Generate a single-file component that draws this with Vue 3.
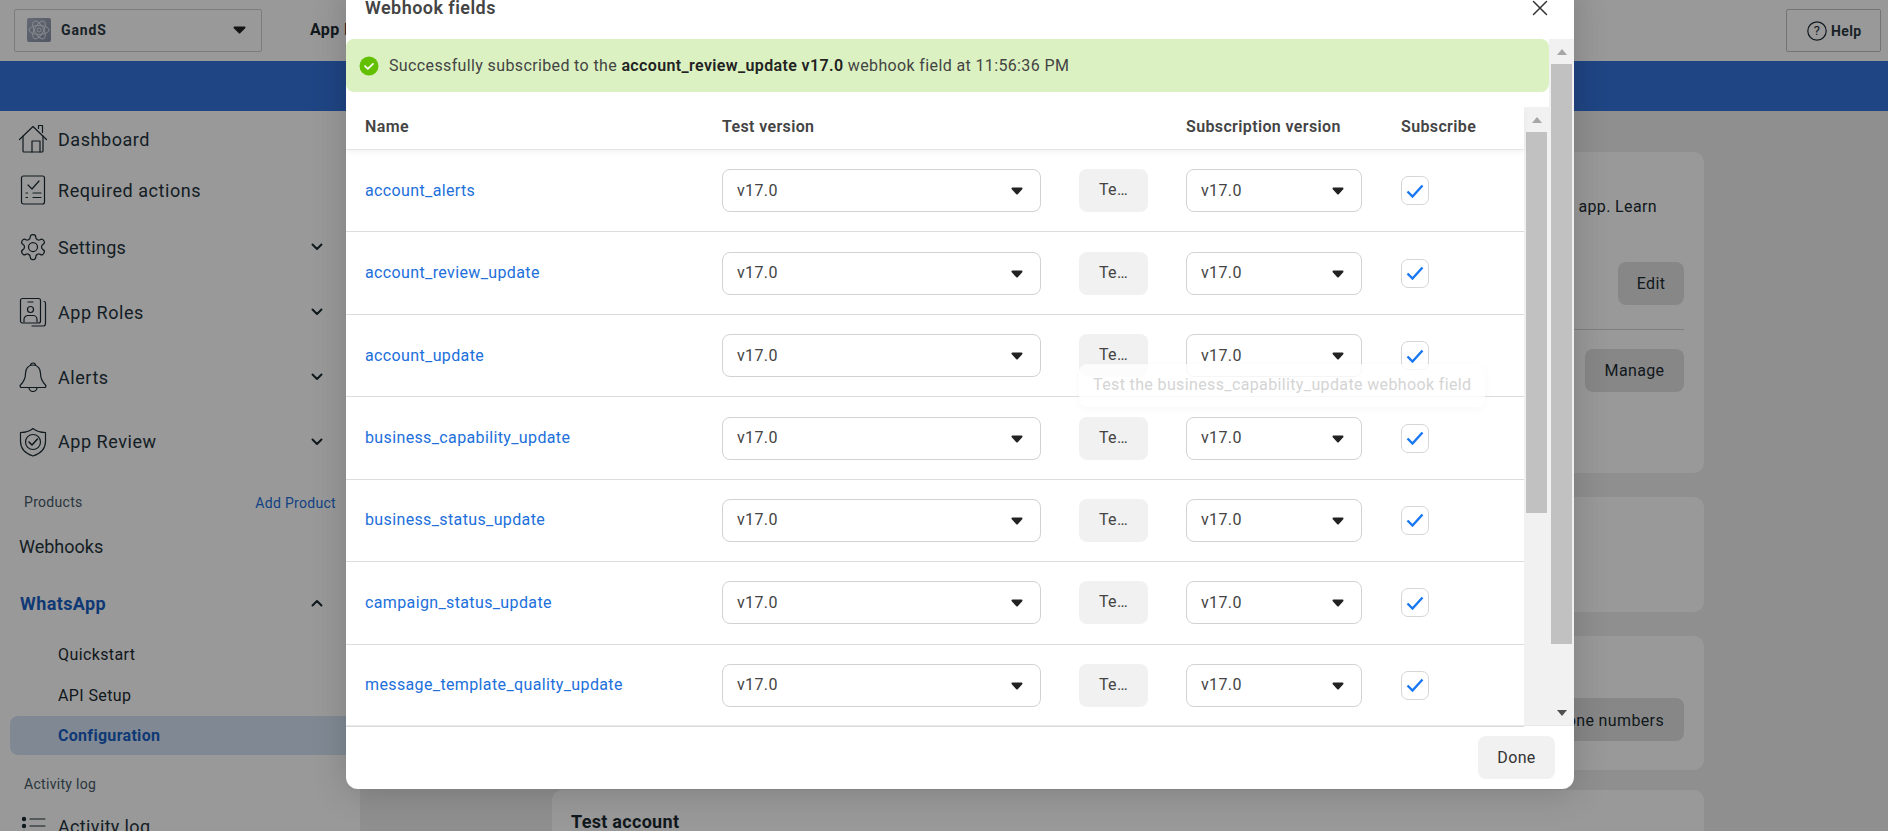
<script setup>
const fields = [
  'account_alerts',
  'account_review_update',
  'account_update',
  'business_capability_update',
  'business_status_update',
  'campaign_status_update',
  'message_template_quality_update'
]
</script>

<template>
  <div class="page">
    <header class="topbar">
      <div class="app-select">
        <span class="app-tile">
          <svg width="24" height="24" viewBox="0 0 24 24" fill="none" stroke="#dde2ec" stroke-width="1">
            <ellipse cx="12" cy="12" rx="10" ry="4.5" />
            <ellipse cx="12" cy="12" rx="10" ry="4.5" transform="rotate(60 12 12)" />
            <ellipse cx="12" cy="12" rx="10" ry="4.5" transform="rotate(120 12 12)" />
            <circle cx="12" cy="12" r="2" />
          </svg>
        </span>
        <span class="app-name">GandS</span>
        <svg class="caret-top" width="13" height="8" viewBox="0 0 13 8"><path d="M1.5 1.5h10L6.5 6.5z" fill="#222" stroke="#222" stroke-width="2" stroke-linejoin="round" /></svg>
      </div>
      <span class="app-id">App ID</span>
      <button class="help">
        <svg width="20" height="20" viewBox="0 0 20 20" fill="none"><circle cx="10" cy="10" r="9.2" stroke="#1c2b33" stroke-width="1.2" /><text x="10" y="14.4" text-anchor="middle" class="help-q">?</text></svg>
        <span>Help</span>
      </button>
    </header>
    <div class="bluebar"></div>

    <div class="content">
      <aside class="sidebar">
        <nav class="group group-a">
          <a class="item">
            <svg class="ico" viewBox="0 0 30 30" fill="none" stroke="#1c2b33" stroke-width="1.2" stroke-linejoin="round" stroke-linecap="round">
              <path d="M1.5 15.5 15 2.5l13.5 13" /><path d="M5 12v15a1 1 0 0 0 1 1h18a1 1 0 0 0 1-1V12" /><path d="M14 28v-11h8v11" /><path d="M20.5 4.5V1.5h4v7" />
            </svg>
            <span>Dashboard</span>
          </a>
          <a class="item">
            <svg class="ico" viewBox="0 0 30 30" fill="none" stroke="#1c2b33" stroke-width="1.2" stroke-linecap="round" stroke-linejoin="round">
              <rect x="3.5" y="1" width="23" height="28" rx="2" /><path d="m10 10 4 4 7-8" /><path d="M15 18h8M15 22.500h8" /><path d="M8 18h1.500M8 22.500h1.500" />
            </svg>
            <span>Required actions</span>
          </a>
        </nav>

        <nav class="group group-b">
          <a class="item tight">
            <svg class="ico" viewBox="0 0 24 24" fill="none" stroke="#1c2b33" stroke-width="1" stroke-linejoin="round">
              <path d="M12.22 2h-.44a2 2 0 0 0-2 2v.18a2 2 0 0 1-1 1.73l-.43.25a2 2 0 0 1-2 0l-.15-.08a2 2 0 0 0-2.730.73l-.22.38a2 2 0 0 0 .73 2.730l.15.1a2 2 0 0 1 1 1.720v.51a2 2 0 0 1-1 1.740l-.15.09a2 2 0 0 0-.73 2.730l.22.38a2 2 0 0 0 2.730.73l.15-.08a2 2 0 0 1 2 0l.43.25a2 2 0 0 1 1 1.730V20a2 2 0 0 0 2 2h.44a2 2 0 0 0 2-2v-.18a2 2 0 0 1 1-1.730l.43-.25a2 2 0 0 1 2 0l.15.08a2 2 0 0 0 2.730-.73l.22-.39a2 2 0 0 0-.73-2.730l-.15-.08a2 2 0 0 1-1-1.740v-.5a2 2 0 0 1 1-1.740l.15-.09a2 2 0 0 0 .73-2.730l-.22-.38a2 2 0 0 0-2.730-.73l-.15.08a2 2 0 0 1-2 0l-.43-.25a2 2 0 0 1-1-1.730V4a2 2 0 0 0-2-2z" />
              <circle cx="12" cy="12" r="3.600" />
            </svg>
            <span>Settings</span>
            <svg class="chev" viewBox="0 0 12 8" fill="none" stroke="#1c2b33" stroke-width="2" stroke-linecap="round" stroke-linejoin="round"><path d="m1.500 1.500 4.500 4.500 4.500-4.500" /></svg>
          </a>
          <a class="item">
            <svg class="ico" viewBox="0 0 30 30" fill="none" stroke="#1c2b33" stroke-width="1.2" stroke-linecap="round" stroke-linejoin="round">
              <rect x="2.500" y="1.500" width="20" height="24.500" rx="2" /><path d="M10 5h5" /><circle cx="12.500" cy="12.500" r="3" /><path d="M6 25v-2.500a4 4 0 0 1 4-4h5a4 4 0 0 1 4 4V25" /><path d="M26 4.500c1 0 1.500.5 1.500 1.500v20c0 1.500-.5 3-2 3H14" />
            </svg>
            <span>App Roles</span>
            <svg class="chev" viewBox="0 0 12 8" fill="none" stroke="#1c2b33" stroke-width="2" stroke-linecap="round" stroke-linejoin="round"><path d="m1.500 1.500 4.500 4.500 4.500-4.500" /></svg>
          </a>
          <a class="item">
            <svg class="ico" viewBox="0 0 30 30" fill="none" stroke="#1c2b33" stroke-width="1.2" stroke-linecap="round" stroke-linejoin="round">
              <path d="M12.500 3.500a2.500 2.500 0 0 1 5 0" /><path d="M15 3c-5 0-7.500 4-7.500 8.500 0 6-2 8.500-5 11.500-1 1 0 2.500 1 2.500h23c1 0 2-1.500 1-2.500-3-3-5-5.500-5-11.500C22.500 7 20 3 15 3z" /><path d="M11 25.500a4 4 0 0 0 8 0" />
            </svg>
            <span>Alerts</span>
            <svg class="chev" viewBox="0 0 12 8" fill="none" stroke="#1c2b33" stroke-width="2" stroke-linecap="round" stroke-linejoin="round"><path d="m1.500 1.500 4.500 4.500 4.500-4.500" /></svg>
          </a>
          <a class="item review">
            <svg class="ico" viewBox="0 0 30 30" fill="none" stroke="#1c2b33" stroke-width="1.2" stroke-linecap="round" stroke-linejoin="round">
              <path d="M15 1.500c3 2.500 7.500 4 12.500 4v9c0 7-5 12-12.500 14.500C7.500 26.500 2.500 21.500 2.500 14.500v-9c5 0 9.500-1.500 12.500-4z" /><circle cx="15" cy="15" r="7.500" /><path d="m11 15 3 3 5.500-6" stroke-width="1.600" />
            </svg>
            <span>App Review</span>
            <svg class="chev" viewBox="0 0 12 8" fill="none" stroke="#1c2b33" stroke-width="2" stroke-linecap="round" stroke-linejoin="round"><path d="m1.500 1.500 4.500 4.500 4.500-4.500" /></svg>
          </a>
        </nav>

        <div class="section products">
          <span>Products</span>
          <a class="add">Add Product</a>
        </div>
        <a class="item plain webhooks"><span>Webhooks</span></a>
        <a class="item plain whatsapp">
          <span>WhatsApp</span>
          <svg class="chev" viewBox="0 0 12 8" fill="none" stroke="#1c2b33" stroke-width="2" stroke-linecap="round" stroke-linejoin="round"><path d="m1.500 6.500 4.500-4.500 4.500 4.500" /></svg>
        </a>
        <div class="sub">
          <a class="sub-item">Quickstart</a>
          <a class="sub-item">API Setup</a>
          <a class="sub-item active">Configuration</a>
        </div>
        <div class="section log-label"><span>Activity log</span></div>
        <a class="item log">
          <svg class="ico" viewBox="0 0 30 30" fill="none" stroke="#1c2b33" stroke-width="1.2" stroke-linecap="round">
            <circle cx="6" cy="8" r="1.600" fill="#1c2b33" /><circle cx="6" cy="15" r="1.600" fill="#1c2b33" /><circle cx="6" cy="22" r="1.600" fill="#1c2b33" />
            <path d="M12 8h15M12 15h15M12 22h15" />
          </svg>
          <span>Activity log</span>
        </a>
      </aside>

      <main class="main">
        <section class="card card-a">
          <p class="learn">app. Learn</p>
          <div class="card-row"><button class="bg-btn edit">Edit</button></div>
          <div class="card-line"></div>
          <div class="card-row"><button class="bg-btn manage">Manage</button></div>
        </section>
        <section class="card card-b"></section>
        <section class="card card-c">
          <div class="card-row"><button class="bg-btn phones">Manage phone numbers</button></div>
        </section>
        <section class="card card-d"><h3>Test account</h3></section>
      </main>
    </div>

    <div class="overlay"></div>

    <div class="modal">
      <div class="modal-head">
        <h2>Webhook fields</h2>
        <svg width="16" height="16" viewBox="0 0 16 16" fill="none" stroke="#333" stroke-width="1.500" stroke-linecap="round"><path d="m1.500 1.500 13 13M14.500 1.500l-13 13" /></svg>
      </div>

      <div class="modal-body">
        <div class="modal-main">
          <div class="banner">
            <svg width="20" height="20" viewBox="0 0 20 20"><circle cx="10" cy="10" r="9.500" fill="#63c000" /><path d="m6 10.200 2.800 2.600L14 7.800" fill="none" stroke="#fff" stroke-width="1.700" stroke-linecap="round" stroke-linejoin="round" /></svg>
            <p>Successfully subscribed to the <b>account_review_update v17.0</b> webhook field at 11:56:36 PM</p>
          </div>

          <div class="table-wrap">
            <div class="table">
              <div class="thead grid">
                <span>Name</span>
                <span>Test version</span>
                <span></span>
                <span>Subscription version</span>
                <span class="subscribe">Subscribe</span>
              </div>
              <div v-for="f in fields" :key="f" class="row grid">
                <a class="link">{{ f }}</a>
                <div class="select">
                  <span>v17.0</span>
                  <svg width="12" height="8" viewBox="0 0 12 8"><path d="M1.500 1.500h9L6 6.500z" fill="#222" stroke="#222" stroke-width="2" stroke-linejoin="round" /></svg>
                </div>
                <button class="test">Te…</button>
                <div class="select">
                  <span>v17.0</span>
                  <svg width="12" height="8" viewBox="0 0 12 8"><path d="M1.500 1.500h9L6 6.500z" fill="#222" stroke="#222" stroke-width="2" stroke-linejoin="round" /></svg>
                </div>
                <span class="check">
                  <svg width="18" height="14" viewBox="0 0 18 14" fill="none"><path d="m1.500 7.500 5 5 10-11" stroke="#1877f2" stroke-width="2.400" stroke-linejoin="miter" /></svg>
                </span>
              </div>
              <div class="tooltip">Test the business_capability_update webhook field</div>
            </div>
            <div class="scroll inner">
              <i class="arrow up"></i>
              <i class="thumb"></i>
            </div>
          </div>
        </div>

        <div class="scroll outer">
          <i class="arrow up"></i>
          <i class="thumb"></i>
          <i class="arrow down"></i>
        </div>
      </div>

      <div class="modal-foot">
        <button class="done">Done</button>
      </div>
    </div>
  </div>
</template>

<style>
html, body { margin: 0; overflow: hidden; }
</style>

<style scoped>
.page {
  position: relative;
  width: 1888px;
  height: 831px;
  overflow: hidden;
  background: #eeeeee;
  font-family: Roboto, "Liberation Sans", sans-serif;
  font-size: 16px;
  letter-spacing: .37px;
  color: #1c2b33;
}
button { font-family: inherit; letter-spacing: inherit; border: 0; }
p, h2, h3 { margin: 0; }

.topbar {
  height: 61px;
  box-sizing: border-box;
  background: #fff;
  display: flex;
  align-items: center;
  padding: 0 7px 0 14px;
}
.app-select {
  width: 248px;
  height: 43px;
  box-sizing: border-box;
  border: 1px solid #ccd0d5;
  border-radius: 2px;
  display: flex;
  align-items: center;
  padding: 0 15px 0 12px;
  margin-top: -1px;
}
.app-tile {
  width: 24px;
  height: 24px;
  border-radius: 2px;
  background: linear-gradient(135deg, #a6afc0, #8790a6);
  display: flex;
}
.app-name { margin-left: 10px; font-size: 14px; font-weight: 700; letter-spacing: .9px; color: #2c3a44; }
.caret-top { margin-left: auto; }
.app-id { margin-left: 48px; font-size: 16px; font-weight: 700; margin-top: -3px; }
.help {
  margin-left: auto;
  width: 95px;
  height: 43px;
  box-sizing: border-box;
  border: 1px solid #bec3c9;
  border-radius: 2px;
  background: #fff;
  display: flex;
  align-items: center;
  padding-left: 20px;
  gap: 4px;
  font-size: 14px;
  font-weight: 700;
  color: #2c3a44;
}
.help-q { font-family: Roboto, sans-serif; font-size: 13px; font-weight: 400; fill: #1c2b33; }
.bluebar { height: 50px; background: #3474dd; }

.content { display: flex; height: 720px; }
.sidebar {
  width: 360px;
  flex: none;
  background: #fff;
  box-sizing: border-box;
  padding-top: 7px;
  font-size: 18px;
  letter-spacing: .55px;
}
.group { display: flex; flex-direction: column; }
.group-a { gap: 9px; }
.group-b { gap: 23px; margin-top: 15px; }
.item {
  height: 42px;
  display: flex;
  align-items: center;
  gap: 10px;
  padding: 0 37px 0 18px;
  color: #24333c;
}
.tight { letter-spacing: .3px; }
.review span { margin-top: -2px; }
.ico { width: 30px; height: 30px; flex: none; }
.chev { width: 12px; height: 8px; margin-left: auto; flex: none; }
.section {
  display: flex;
  justify-content: space-between;
  align-items: center;
  box-sizing: border-box;
  font-size: 14px;
  letter-spacing: .3px;
  color: #465a69;
  height: 24px;
  padding: 0 24px;
}
.products { margin-top: 27px; }
.add { color: #216fdb; margin-top: 2px; }
.plain { padding-left: 20px; }
.webhooks { margin-top: 11px; padding-left: 19px; letter-spacing: 0; }
.whatsapp { margin-top: 15px; color: #1a5fc4; font-weight: 700; letter-spacing: .4px; }
.sub { margin-top: 10px; display: flex; flex-direction: column; letter-spacing: .4px; }
.sub-item {
  height: 41px;
  display: flex;
  align-items: center;
  padding-left: 58px;
  font-size: 16px;
}
.sub-item.active {
  height: 39px;
  margin: 0 0 0 10px;
  padding-left: 48px;
  border-radius: 8px 0 0 8px;
  background: #d5e5f6;
  color: #1a5fc4;
  font-weight: 700;
  letter-spacing: .3px;
}
.log-label { margin-top: 17px; }
.log { margin-top: 9px; letter-spacing: .35px; }
.log span { font-size: 18px; }

.main {
  flex: 1;
  box-sizing: border-box;
  padding: 41px 184px 0 192px;
  display: flex;
  flex-direction: column;
  gap: 24px;
}
.card {
  flex: none;
  background: #fff;
  border-radius: 10px;
  box-sizing: border-box;
  padding: 0 20px;
}
.card-a { height: 321px; padding-top: 43px; }
.card-b { height: 115px; }
.card-c { height: 134px; padding-top: 62px; }
.card-d { height: 120px; margin-top: -4px; padding-top: 21px; }
.card-d h3 { font-size: 18px; font-weight: 700; line-height: 21px; letter-spacing: .3px; margin-left: -1px; }
.learn { text-align: right; padding-right: 27px; height: 24px; line-height: 24px; }
.card-row { display: flex; justify-content: flex-end; }
.bg-btn {
  height: 43px;
  border-radius: 8px;
  background: #e2e2e2;
  color: #1c2b33;
  font-size: 16px;
}
.edit { width: 66px; margin-top: 43px; }
.manage { width: 99px; }
.phones { width: 220px; padding-top: 2px; }
.card-line { height: 1px; background: #d4d4d4; margin: 24px 0 19px; }

.overlay { position: absolute; inset: 0; background: rgba(0, 0, 0, .4); }

.modal {
  position: absolute;
  left: 346px;
  top: -20px;
  width: 1228px;
  height: 809px;
  background: #fff;
  border-radius: 12px;
  box-shadow: 0 2px 36px rgba(0, 0, 0, .18);
  display: flex;
  flex-direction: column;
  overflow: hidden;
  color: #444;
}
.modal-head {
  height: 59px;
  flex: none;
  box-sizing: border-box;
  display: flex;
  justify-content: space-between;
  align-items: center;
  padding: 0 26px 4px 19px;
}
.modal-head h2 { font-size: 18px; font-weight: 600; color: #444; letter-spacing: .45px; }
.modal-body { flex: 1; min-height: 0; display: flex; }
.modal-main { width: 1203px; display: flex; flex-direction: column; }
.banner {
  height: 53px;
  flex: none;
  background: #dbf1c1;
  border-radius: 8px;
  display: flex;
  align-items: center;
  padding-left: 13px;
  gap: 10px;
}
.banner b { color: #222; font-weight: 600; }
.table-wrap { flex: 1; min-height: 0; margin-top: 15px; display: flex; }
.table { position: relative; width: 1178px; }
.grid {
  display: grid;
  grid-template-columns: 319px 319px 69px 176px 28px;
  column-gap: 38px;
  align-items: center;
  padding-left: 19px;
}
.thead {
  height: 42px;
  margin-bottom: 1px;
  box-sizing: border-box;
  font-weight: 600;
  color: #444;
  padding-bottom: 4px;
  box-shadow: 0 3px 6px rgba(0, 0, 0, .05), 0 1px 0 #eeeeee;
  position: relative;
}
.subscribe { white-space: nowrap; margin-left: 1px; }
.row {
  height: 82.45px;
  box-sizing: border-box;
  border-bottom: 1px solid #dcdcdc;
}
.row:last-of-type { border-bottom: 0; }
.link { color: #216fdb; margin-top: -1px; }
.select {
  height: 43px;
  box-sizing: border-box;
  border: 1px solid #d2d2d2;
  border-radius: 8px;
  display: flex;
  align-items: center;
  justify-content: space-between;
  padding: 0 14px;
  color: #444;
  background: #fff;
}
.select span { margin-top: -1px; }
.select svg { margin-right: 3px; margin-top: 1px; }
.test {
  height: 43px;
  width: 69px;
  padding: 0 0 2px;
  border-radius: 8px;
  background: #f1f1f1;
  color: #444;
  font-size: 16px;
}
.check {
  width: 28px;
  height: 29px;
  box-sizing: border-box;
  border: 1px solid #d6d6d6;
  border-radius: 7px;
  display: flex;
  align-items: center;
  justify-content: center;
  margin-left: 1px;
}
.tooltip {
  position: absolute;
  left: 733px;
  top: 257px;
  width: 406px;
  height: 43px;
  box-sizing: border-box;
  padding: 0 0 2px 14px;
  display: flex;
  align-items: center;
  border-radius: 8px;
  background: rgba(255, 255, 255, .78);
  box-shadow: 0 2px 10px rgba(0, 0, 0, .03);
  color: #d4d4d4;
  white-space: nowrap;
}

.scroll {
  width: 25px;
  flex: none;
  background: #f1f1f1;
  display: flex;
  flex-direction: column;
  align-items: center;
}
.arrow {
  width: 25px;
  height: 25px;
  flex: none;
  display: flex;
  align-items: center;
  justify-content: center;
}
.arrow::before {
  content: "";
  width: 0;
  height: 0;
  border-left: 5.500px solid transparent;
  border-right: 5.500px solid transparent;
}
.arrow.up::before { border-bottom: 6px solid #a6a6a6; }
.arrow.down { margin-top: auto; }
.arrow.down::before { border-top: 6px solid #505050; }
.thumb { width: 21px; background: #c1c1c1; flex: none; }
.outer .thumb { height: 580px; }
.inner .thumb { height: 381px; }

.modal-foot {
  height: 64px;
  flex: none;
  box-sizing: border-box;
  border-top: 1px solid #e8e8e8;
  display: flex;
  justify-content: flex-end;
  align-items: flex-start;
  padding: 10px 19px 0 0;
}
.done {
  width: 77px;
  height: 43px;
  border-radius: 8px;
  background: #f1f1f1;
  color: #333;
  font-size: 16px;
}
</style>
